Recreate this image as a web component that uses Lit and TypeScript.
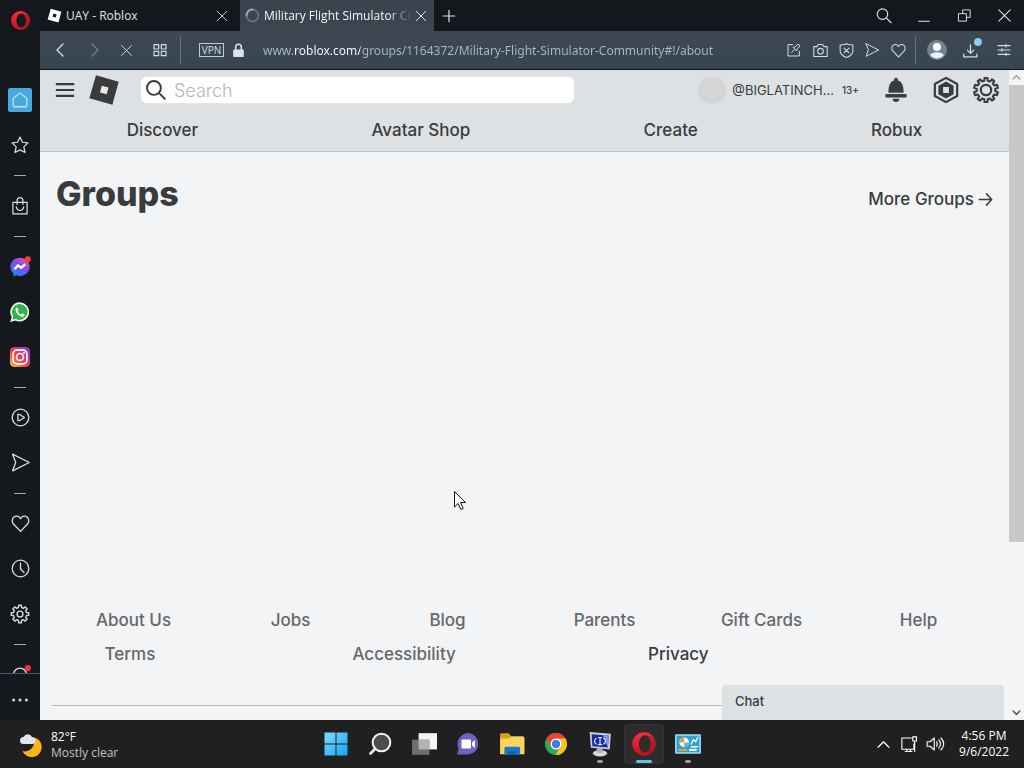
import { LitElement, html, css, svg, nothing, TemplateResult } from "lit";
import { customElement } from "lit/decorators.js";

const icon = (size: number, body: TemplateResult, box = 24) =>
  html`<svg width=${size} height=${size} viewBox="0 0 ${box} ${box}" fill="none" stroke="currentColor" stroke-width="1.5" stroke-linecap="round" stroke-linejoin="round" aria-hidden="true">${body}</svg>`;

const gearPath = (teeth: number, outer: number, inner: number, c = 12) => {
  const pts: string[] = [];
  const step = (Math.PI * 2) / teeth;
  for (let i = 0; i < teeth; i++) {
    const a = i * step - Math.PI / 2;
    for (const [k, r] of [[-0.3, inner], [-0.2, outer], [0.2, outer], [0.3, inner]]) {
      pts.push(`${(c + Math.cos(a + k * step) * r).toFixed(2)} ${(c + Math.sin(a + k * step) * r).toFixed(2)}`);
    }
  }
  return "M" + pts.join("L") + "Z";
};

const heart = svg`<path d="M12 21 4.2 12.9C2 10.6 2 7 4.2 4.9c2.2-2.1 5.5-1.8 7.2.6l.6.9.6-.9c1.7-2.4 5-2.7 7.2-.6 2.200 2.100 2.200 5.700 0 8z"/>`;
const send = svg`<path d="M3 2.500 22 12 3 21.500 6.500 12z"/>`;
const cross = svg`<path d="M4 4 20 20M20 4 4 20"/>`;
const glass = svg`<circle cx="10" cy="9.500" r="7"/><path d="m15 14.500 6.500 6.500"/>`;

const operaRing = (id: string) => svg`
  <defs><linearGradient id=${id} x1="0" y1="0" x2="0" y2="1"><stop offset="0" stop-color="#ff2c3c"/><stop offset="1" stop-color="#bd1220"/></linearGradient></defs>
  <path fill="url(#${id})" stroke="none" fill-rule="evenodd" d="M12 1.200a10.800 10.800 0 1 0 0 21.600 10.800 10.800 0 0 0 0-21.600zM13 4c3.100 0 5.200 3.500 5.200 8s-2.100 8-5.200 8-5.700-3.500-5.700-8S9.900 4 13 4z"/>
  <path fill="#7d0d18" stroke="none" d="M14.500 4.500c3 .8 4 4 4 7.500s-1 6.700-4 7.500c5 1.300 8.300-2.500 8.300-7.500S19.500 3.200 14.500 4.500z" opacity=".4"/>`;

const robloxMark = (fill: string, hole: string) => svg`<path stroke="none" fill=${fill} d="M6 1 23 5.800 18.300 23 1 18.200z"/><path stroke="none" fill=${hole} d="m10.300 8.900 5.100 1.300-1.400 5-5-1.300z"/>`;

const side: { label: string; art?: TemplateResult; rule?: boolean }[] = [
  { label: "Speed Dial", art: html`<span class="home">${icon(18, svg`<path stroke-width="1.700" d="M12 2.500 21 10v9.500c0 1-.6 1.500-1.500 1.500h-15C3.600 21 3 20.500 3 19.500V10z"/>`)}</span>` },
  { label: "Bookmarks", art: icon(20, svg`<path d="m12 2.500 2.900 6.200 6.600.8-4.900 4.700 1.400 6.800-6-3.200L6 21l1.400-6.800-4.900-4.700 6.600-.8z"/>`) },
  { label: "", rule: true },
  { label: "Shopping", art: icon(20, svg`<path d="M3.500 7.500h17v14h-17zM8.500 10V5.500a3.500 3.500 0 0 1 7 0V10M7.500 13c.6 3 2.300 4.300 4.500 4.300s3.900-1.300 4.500-4.300"/>`) },
  { label: "", rule: true },
  { label: "Messenger", art: icon(22, svg`
    <defs><linearGradient id="msg" x1=".2" y1="1" x2=".8" y2="0"><stop offset="0" stop-color="#1a86ff"/><stop offset=".55" stop-color="#7b4df2"/><stop offset="1" stop-color="#f0509a"/></linearGradient></defs>
    <path fill="url(#msg)" stroke="none" d="M12 2C6.200 2 1.500 6.200 1.500 11.800c0 3 1.300 5.500 3.400 7.300v3.300l3.200-1.300c1.200.4 2.500.6 3.900.6 5.800 0 10.500-4.200 10.500-9.900S17.800 2 12 2z"/>
    <path stroke="#fff" stroke-width="2.600" stroke-linecap="butt" d="m5.800 14.500 4-4.300 3.500 2.600 4.500-3.800"/><circle cx="20.500" cy="3.500" r="3.300" fill="#fa3b30" stroke="none"/>`) },
  { label: "WhatsApp", art: icon(22, svg`
    <path fill="#fff" stroke="none" d="M12 1.500A10.400 10.400 0 0 0 3 17.300L1.400 22.800l5.700-1.500A10.400 10.400 0 1 0 12 1.500z"/>
    <path fill="#35b34a" stroke="none" d="M12 3.200a8.700 8.700 0 0 0-7.300 13.600l-1 3.700 3.700-1A8.700 8.700 0 1 0 12 3.200z"/>
    <path fill="#fff" stroke="none" d="M8.600 7.200c-.9.300-1.700 1.400-1.400 2.900.7 3.200 3.600 6.200 6.700 7 1.500.4 2.900-.4 3.100-1.900l-.1-.6-2.400-1.200-1.300 1.300c-1.700-.6-3.200-2-3.900-3.800l1-1.200-1-2.400z"/>`) },
  { label: "Instagram", art: icon(22, svg`
    <defs><linearGradient id="ig" x1="0" y1="1" x2="1" y2="0"><stop offset="0" stop-color="#ffc94a"/><stop offset=".4" stop-color="#f5483f"/><stop offset=".7" stop-color="#c832a0"/><stop offset="1" stop-color="#6a45d8"/></linearGradient></defs>
    <rect x="1" y="1" width="22" height="22" rx="5" fill="url(#ig)" stroke="none"/><g stroke="#fff" stroke-width="1.800"><rect x="4.500" y="4.500" width="15" height="15" rx="4.200"/><circle cx="12" cy="12" r="3.800"/></g><circle cx="16.500" cy="7.500" r="1.100" fill="#fff" stroke="none"/>`) },
  { label: "", rule: true },
  { label: "Player", art: icon(21, svg`<circle cx="12" cy="12" r="9.500"/><path d="M9 8.500h2l5.500 3.500-5.500 3.500H9z"/>`) },
  { label: "My Flow", art: icon(21, send) },
  { label: "", rule: true },
  { label: "Favourites", art: icon(21, heart) },
  { label: "History", art: icon(21, svg`<circle cx="12" cy="12" r="9.500"/><path d="M12 6v6.500l4 4"/>`) },
  { label: "Settings", art: icon(22, svg`<path d=${gearPath(8, 9.600, 7.300)}/><circle cx="12" cy="12" r="3.200"/>`) },
  { label: "", rule: true },
  { label: "Notifications", art: icon(22, svg`<path d="M5 14v-2.500a7 7 0 0 1 14 0V14"/><circle cx="20.500" cy="4.500" r="3.400" fill="#f0323e" stroke="none"/>`) },
];

const tasks: { label: string; art: TemplateResult; mark?: string }[] = [
  { label: "Start", art: icon(24, svg`<defs><linearGradient id="win" x1="0" y1="0" x2="1" y2="1"><stop offset="0" stop-color="#7ddcff"/><stop offset="1" stop-color="#14a4ee"/></linearGradient></defs><path fill="url(#win)" stroke="none" d="M.5.500h11v11H.500zM12.500.500h11v11h-11zM.500 12.500h11v11H.500zM12.500 12.500h11v11h-11z"/>`) },
  { label: "Search", art: icon(24, svg`<path stroke="#e8e8e8" stroke-width="2.800" d="m2.500 21.500 5-5"/><circle cx="13.500" cy="10.500" r="8.800" fill="#4c4c4c" stroke="#f2f2f2" stroke-width="2"/>`) },
  { label: "Task View", art: icon(26, svg`<path fill="#f4f4f4" stroke="none" d="M7 2h17v15H7z"/><path fill="#747474" stroke="none" d="M1 8h16v14H1z" opacity=".95"/><path fill="#b4b4b4" stroke="none" d="M7 8h10v9H7z"/>`) },
  { label: "Chat", art: icon(24, svg`<path fill="#6a62c4" stroke="none" d="M12.500 1A11 11 0 0 0 2.700 17L1 22.500h11.500a10.800 10.800 0 0 0 0-21.500z"/><rect x="5.500" y="7.500" width="9.500" height="9" rx="1" fill="#fff" stroke="none"/><path fill="#fff" stroke="none" d="m16 10.500 3-2.500v8l-3-2.500z"/>`) },
  { label: "File Explorer", art: icon(26, svg`<path fill="#dc9d18" stroke="none" d="M1 3.500C1 2.500 1.700 2 2.500 2H9l2.500 3H22v6H1z"/><path fill="#ffd45c" stroke="none" d="M1 7h8.500l2-2H22c.8 0 1.500.5 1.500 1.500v15H1z"/><path fill="#1879cc" stroke="none" d="M5 22v-6c0-1 .6-1.500 1.500-1.500h11.500c1 0 1.500.5 1.500 1.500v6z"/><path fill="#0b5fae" stroke="none" d="M8.500 19h7.500v3H8.500z"/>`) },
  { label: "Chrome", art: icon(24, svg`<g stroke="none"><circle cx="12" cy="12" r="11" fill="#34a853"/><path fill="#ea4335" d="M2.500 6.500A11 11 0 0 1 21.500 6.500L12 7 7 14z"/><path fill="#fbc11c" d="M21.500 6.500A11 11 0 0 1 11.500 23l5-8.500L12 6.500z"/><circle cx="12" cy="12" r="5.500" fill="#fff"/><circle cx="12" cy="12" r="4.200" fill="#3b7ded"/></g>`) },
  { label: "Remote Desktop", mark: "dim", art: icon(26, svg`<g stroke="none"><ellipse cx="12" cy="20.500" rx="6.500" ry="3" fill="#d8dadd"/><path fill="#aeb4be" d="M9 16h5l1 4H9z"/><path fill="#c9cfda" d="M2.500 1 22 2.500 21 17 3.500 15.500z"/><path fill="#1b2c9c" d="m4.300 3 15.800 1.200-.8 11L5 14z"/><path fill="#7d97ee" d="m14.500 3.800 5.600.4-.8 11z"/></g><path stroke="#dfe6ff" stroke-width="1.100" d="M10.500 6h3M12 6v6.500M10.500 12.500h3M8.500 7c-2 1-2 4 0 5M15.500 7c2 1 2 4 0 5"/>`) },
  { label: "Opera", mark: "live", art: icon(26, operaRing("opTask")) },
  { label: "Control Panel", mark: "dim", art: icon(26, svg`<g stroke="none"><rect x="0" y="3" width="24" height="18" rx="1" fill="#8edcf7"/><rect x="1.500" y="4.500" width="21" height="15" fill="#2f9fd4"/><circle cx="8.500" cy="10.500" r="4.500" fill="#fff"/><path fill="#f59a23" d="M8.500 10.500V6a4.500 4.500 0 0 0-4.500 4.500z"/><path fill="#58b6e4" d="M8.500 10.500H13a4.500 4.500 0 0 1-4.500 4.500z"/><path fill="#f59a23" d="M3 16.500h8v2H3z"/><path fill="#e8f6fc" d="M13 16.500h7v2h-7z"/></g><path stroke="#fff" stroke-width="1.300" d="m15 12 2-4 2 2 2-4M15 14.500h6"/>`) },
];

@customElement("browser-sidebar")
class BrowserSidebar extends LitElement {
  static styles = css`
    :host { display: flex; flex-direction: column; width: 40px; background: #15191e; color: #d9dde1; }
    button { border: 0; padding: 0; background: none; color: inherit; display: grid; place-items: center; width: 100%; }
    svg { display: block; overflow: visible; }
    .brand { height: 40px; margin-bottom: 37px; flex: none; }
    .list { flex: 1; min-height: 0; overflow: hidden; display: flex; flex-direction: column; }
    .item { height: 45px; flex: none; }
    .rule { width: 12px; height: 16px; flex: none; margin: 0 auto; display: grid; align-items: center; }
    .rule::before { content: ""; height: 1px; background: #a4a8ac; }
    .home { width: 24px; height: 24px; background: #43a9e0; border-radius: 2px; display: grid; place-items: center; }
    .more { height: 47px; flex: none; border-top: 1px solid #545a60; padding-top: 6px; }
  `;
  render() {
    return html`
      <button class="brand" aria-label="Opera menu">${icon(21, operaRing("opSide"))}</button>
      <div class="list">
        ${side.map((s) => s.rule ? html`<div class="rule"></div>` : html`<button class="item" aria-label=${s.label}>${s.art}</button>`)}
      </div>
      <button class="more" aria-label="More">${icon(18, svg`<g fill="currentColor" stroke="none"><circle cx="3.500" cy="12" r="2"/><circle cx="12" cy="12" r="2"/><circle cx="20.500" cy="12" r="2"/></g>`)}</button>`;
  }
}

@customElement("browser-chrome")
class BrowserChrome extends LitElement {
  static styles = css`
    :host { display: block; font-family: "Open Sans", "Noto Sans", sans-serif; color: #dfe5ea; }
    button { border: 0; padding: 0; background: none; color: inherit; font: inherit; display: grid; place-items: center; }
    svg { display: block; overflow: visible; flex: none; }
    .tabs { display: flex; height: 31px; background: #14171c; font-size: 12px; }
    .tab { display: flex; align-items: center; width: 200px; box-sizing: border-box; padding-left: 7px; }
    .live { width: 194px; padding-left: 5px; background: #3a4550; color: #f4f6f8; }
    .name { flex: 1; min-width: 0; white-space: nowrap; padding-left: 4px; text-align: left; display: block; }
    .live .name { -webkit-mask-image: linear-gradient(90deg, #000 84%, transparent); mask-image: linear-gradient(90deg, #000 84%, transparent); }
    .shut { width: 24px; height: 31px; flex: none; margin-right: 6px; }
    .live .shut { width: 18px; margin-right: 4px; }
    .plus { width: 30px; }
    .win { width: 40px; }
    .gap { flex: 1; }
    .bar { display: flex; align-items: center; height: 38px; background: linear-gradient(#3f4852, #374552); border-bottom: 1px solid #10151b; padding: 0 4px; color: #d3dce4; }
    .nav { width: 33px; height: 38px; }
    .off { color: #717d88; }
    .line { width: 1px; height: 28px; background: #69747e; margin-left: 4px; }
    .vpn { border: 1px solid #c3ccd4; height: 14px; width: 25px; font-size: 10px; line-height: 12px; margin: 0 7px 0 18px; box-sizing: border-box; }
    .url { flex: 1; min-width: 0; border: 0; outline: 0; padding: 0; margin-left: 17px; height: 24px; font: 12px "Noto Sans", "Open Sans", sans-serif;
      background: linear-gradient(90deg, #adb8c3 31px, #ffffff 31px, #ffffff 97px, #adb8c3 97px); -webkit-background-clip: text; background-clip: text; color: transparent; }
    .act { width: 26px; height: 38px; }
    .user { width: 38px; height: 38px; padding-left: 4px; }
    .tail { width: 33px; height: 38px; }
  `;
  render() {
    const x = (n: number) => icon(n, cross);
    return html`
      <div class="tabs">
        <div class="tab">${icon(15, robloxMark("#fff", "#14171c"))}<button class="name">UAY - Roblox</button><button class="shut" aria-label="Close tab">${x(14)}</button></div>
        <div class="tab live">${icon(15, svg`<circle cx="12" cy="12" r="9.500" stroke="#64707b" stroke-width="3.200"/><path stroke="#98a3ad" stroke-width="3.200" d="M2.500 12A9.500 9.500 0 0 1 12 2.500"/>`)}<button class="name">Military Flight Simulator Co</button><button class="shut" aria-label="Close tab">${x(14)}</button></div>
        <button class="plus" aria-label="New tab">${icon(16, svg`<path stroke-width="1.800" d="M12 3.500v17M3.500 12h17"/>`)}</button>
        <span class="gap"></span>
        <button class="win" aria-label="Search tabs">${icon(18, glass)}</button>
        <button class="win" aria-label="Minimize">${icon(14, svg`<path stroke-width="2" d="M3 21h18"/>`)}</button>
        <button class="win" aria-label="Restore">${icon(15, svg`<path d="M3 9h12v12H3zM9 9V3h12v12h-6"/>`)}</button>
        <button class="win" aria-label="Close">${x(17)}</button>
      </div>
      <div class="bar">
        <button class="nav" aria-label="Back">${icon(16, svg`<path stroke-width="2" d="M15 3 6 12l9 9"/>`)}</button>
        <button class="nav off" aria-label="Forward">${icon(16, svg`<path stroke-width="2" d="m9 3 9 9-9 9"/>`)}</button>
        <button class="nav" aria-label="Stop">${x(15)}</button>
        <button class="nav" aria-label="Speed Dial">${icon(16, svg`<path stroke-width="1.800" d="M3 4h7v6.500H3zM14 4h7v6.500h-7zM3 14h7v6.500H3zM14 14h7v6.500h-7z"/>`)}</button>
        <span class="line"></span>
        <button class="vpn">VPN</button>
        ${icon(15, svg`<rect x="3.500" y="10.500" width="17" height="12" rx="1.500" fill="#dbe2e8" stroke="none"/><path stroke="#dbe2e8" stroke-width="2.500" d="M7.500 11V6.500a4.500 4.500 0 0 1 9 0V11"/>`)}
        <input class="url" aria-label="Address" value="www.roblox.com/groups/1164372/Military-Flight-Simulator-Community#!/about" />
        <button class="act" aria-label="Snapshot edit">${icon(16, svg`<path d="M10 4H3v17h17v-7M8.500 15.500l4-4M11 8.500l5 5 1-3.500 4-4L18 3l-4 4z"/>`)}</button>
        <button class="act" aria-label="Snapshot">${icon(17, svg`<path d="M2.500 6.500H7L9 3.500h6l2 3h4.500v14h-19z"/><circle cx="12" cy="13" r="4"/>`)}</button>
        <button class="act" aria-label="Ad blocker">${icon(17, svg`<path d="M12 2.500c3 1.300 6 1.800 9 1.800v8c0 4.500-4 7.700-9 9.700-5-2-9-5.200-9-9.700v-8c3 0 6-.5 9-1.800zM8.500 8.500l7 7M15.500 8.500l-7 7"/>`)}</button>
        <button class="act" aria-label="Send to Flow">${icon(16, send)}</button>
        <button class="act" aria-label="Bookmark">${icon(17, heart)}</button>
        <span class="line"></span>
        <button class="user" aria-label="Profile">${icon(20, svg`<g stroke="none"><circle cx="12" cy="12" r="12" fill="#75818c"/><circle cx="12" cy="8.500" r="4.800" fill="#fff"/><path fill="#e7f4fb" d="M3.800 18c2-4.500 14.400-4.500 16.400 0a10 10 0 0 1-16.400 0z"/></g>`)}</button>
        <button class="tail" aria-label="Downloads">${icon(17, svg`<path stroke-width="1.800" d="M12 4v12M7.500 11.500 12 16l4.500-4.500M2.500 17v4h18.500v-4"/><circle cx="22.500" cy="0" r="5.500" fill="#82d3ee" stroke="none"/>`)}</button>
        <button class="tail" aria-label="Easy setup">${icon(16, svg`<path stroke-width="1.700" d="M3 5.500h18M3 12h18M3 18.500h18M15 3.500v4M9 10v4M15 16.500v4"/>`)}</button>
      </div>`;
  }
}

@customElement("groups-page")
class GroupsPage extends LitElement {
  static styles = css`
    :host { display: flex; min-height: 0; font-family: Inter, "Open Sans", sans-serif; color: #393b3d; }
    button { border: 0; padding: 0; background: none; color: inherit; display: grid; place-items: center; }
    svg { display: block; overflow: visible; }
    a { color: inherit; text-decoration: none; }
    .page { flex: 1; min-width: 0; position: relative; display: flex; flex-direction: column; background: #f2f4f5; overflow: hidden; }
    .head { background: #dee1e3; border-bottom: 1px solid #bfc3c6; }
    .top { display: flex; align-items: center; height: 40px; padding: 0 8px 0 10px; }
    .menu { width: 30px; height: 40px; }
    .logo { width: 48px; display: grid; place-items: center; }
    .search { height: 28px; margin-left: 12px; box-sizing: border-box; background: #fff; border: 1px solid #e3e6e8; border-radius: 7px; display: flex; align-items: center; padding: 0 5px; flex: 0 1 435px; min-width: 0; }
    .query { flex: 1; min-width: 0; border: 0; outline: 0; padding: 0; margin-left: 8px; background: none; font: 300 18px Inter, sans-serif; color: #393b3d; }
    .query::placeholder { color: #b4b7b9; opacity: 1; }
    .space { flex: 1; }
    .who { display: flex; align-items: center; gap: 6px; font-size: 13px; }
    .face { width: 28px; height: 28px; border-radius: 50%; background: #d3d5d6; }
    .age { font-size: 10px; font-weight: 500; margin: 0 12px 0 8px; }
    .tool { width: 50px; height: 40px; }
    .nav { display: flex; justify-content: space-around; height: 41px; line-height: 41px; font-size: 17px; font-weight: 500; }
    .title { display: flex; align-items: center; justify-content: space-between; padding: 20px 16px 0; }
    h1 { margin: 0; font-size: 34px; line-height: 44px; font-weight: 800; }
    .more { display: flex; align-items: center; gap: 4px; font-size: 17px; font-weight: 500; padding-top: 10px; }
    .foot { margin-top: auto; padding: 0 12px 14px; font-size: 17px; font-weight: 500; color: #65686b; }
    .row { display: grid; grid-template-columns: repeat(6, 1fr); height: 34px; line-height: 34px; text-align: center; padding-left: 3px; }
    .low { grid-template-columns: 150fr 399fr 150fr 244fr; }
    .dark { color: #393b3d; }
    .edge { border-top: 1px solid #b8bbbd; margin-top: 34px; }
    .chat { position: absolute; right: 5px; bottom: 0; width: 282px; height: 35px; background: #dee1e3; border-radius: 4px 4px 0 0; font: 500 13px Inter, sans-serif; text-align: left; padding: 0 13px 4px; display: block; }
    .scroll { width: 15px; display: flex; flex-direction: column; background: #f3f4f5; color: #55585a; }
    .arrow { height: 15px; width: 15px; }
    .faint { color: #a5a7a9; }
    .thumb { flex: 457; background: #c7c8c9; }
    .rest { flex: 163; }
  `;
  render() {
    return html`
      <div class="page">
        <header class="head">
          <div class="top">
            <button class="menu" aria-label="Menu">${icon(20, svg`<path stroke-width="2.600" stroke-linecap="butt" d="M1 5h22M1 12h22M1 19h22"/>`)}</button>
            <a class="logo" href="#home" aria-label="Roblox">${icon(32, robloxMark("#393b3d", "#e6e9eb"))}</a>
            <label class="search">${icon(20, svg`<g stroke-width="2.300"><circle cx="9.500" cy="9.500" r="8.300"/><path d="m15.700 15.700 7 7"/></g>`)}<input class="query" type="search" placeholder="Search" aria-label="Search" /></label>
            <span class="space"></span>
            <div class="who"><span class="face"></span><span>@BIGLATINCH...</span></div>
            <span class="age">13+</span>
            <button class="tool" aria-label="Notifications">${icon(26, svg`<g fill="currentColor" stroke="none"><circle cx="12" cy="2.500" r="1.800"/><path d="M5 14.500C5 7 7 3 12 3s7 4 7 11.500z"/><path d="M3.500 15.700h17c1 0 1.500.7 1.500 1.600S21.500 19 20.500 19h-17C2.500 19 2 18.200 2 17.300s.5-1.600 1.500-1.600zM9 20h6a3 3 0 0 1-6 0z"/></g>`)}</button>
            <button class="tool" aria-label="Robux">${icon(26, svg`<path stroke-width="2" d="m12 .8 10.300 5.700v11L12 23.200 1.700 17.500v-11z"/><path fill="currentColor" stroke="none" fill-rule="evenodd" d="m12 4.200 7 3.900v7.800l-7 3.900-7-3.900V8.100zM9.300 9.300v5.400h5.400V9.300z"/>`)}</button>
            <button class="menu" aria-label="Settings">${icon(26, svg`<path stroke-width="1.900" d=${gearPath(10, 11.200, 8.600)}/><circle cx="12" cy="12" r="4.800" stroke-width="2"/>`)}</button>
          </div>
          <nav class="nav">${["Discover", "Avatar Shop", "Create", "Robux"].map((t) => html`<a href="#${t}">${t}</a>`)}</nav>
        </header>
        <div class="title"><h1>Groups</h1><a class="more" href="#more">More Groups ${icon(15, svg`<path stroke-width="2.400" d="M2 12h20M13.500 3l8.500 9-8.500 9"/>`)}</a></div>
        <footer class="foot">
          <div class="row">${["About Us", "Jobs", "Blog", "Parents", "Gift Cards", "Help"].map((t) => html`<a href="#${t}">${t}</a>`)}</div>
          <div class="row low"><a href="#terms">Terms</a><a href="#accessibility">Accessibility</a><a class="dark" href="#privacy">Privacy</a></div>
          <div class="edge"></div>
        </footer>
        <button class="chat">Chat</button>
      </div>
      <div class="scroll">
        <button class="arrow faint" aria-label="Scroll up">${icon(9, svg`<path stroke-width="4" d="m3 16 9-9 9 9"/>`)}</button>
        <div class="thumb"></div><div class="rest"></div>
        <button class="arrow" aria-label="Scroll down">${icon(9, svg`<path stroke-width="4" d="m3 8 9 9 9-9"/>`)}</button>
      </div>`;
  }
}

@customElement("task-bar")
class TaskBar extends LitElement {
  static styles = css`
    :host { display: grid; grid-template-columns: 1fr auto 1fr; height: 48px; background: #202020; color: #fff; font: 12px/16px "Open Sans", "Noto Sans", sans-serif; }
    button { border: 0; padding: 0; background: none; color: inherit; font: inherit; display: grid; place-items: center; }
    svg { display: block; overflow: visible; }
    .weather { display: flex; align-items: center; gap: 8px; padding: 2px 0 0 19px; text-align: left; justify-self: start; }
    .sky { color: #c4c4c4; }
    .apps { display: flex; }
    .app { width: 44px; height: 48px; position: relative; }
    .on::before { content: ""; position: absolute; inset: 4px 2px; background: #2d2d2d; border: 1px solid #353535; border-radius: 4px; }
    .on svg { position: relative; }
    .mark { position: absolute; bottom: 5px; left: 19px; width: 6px; height: 3px; border-radius: 2px; background: #9b9b9b; }
    .wide { left: 14px; width: 16px; background: #60c0ee; }
    .tray { display: flex; align-items: center; justify-content: flex-end; padding-right: 15px; }
    .t { width: 26px; height: 48px; }
    .clock { text-align: right; display: block; margin-left: 11px; }
  `;
  render() {
    return html`
      <button class="weather">${icon(24, svg`<g stroke="none"><path fill="#fbb51b" d="M15.500 4.500A10 10 0 1 1 3.500 18c7 2 13-4 12-13.500z"/><path fill="#dfe6ee" d="M4.500 11a3.500 3.500 0 0 1 0-7 4.700 4.700 0 0 1 8.500 0 3.500 3.500 0 0 1 0 7z"/></g>`)}
        <span><div>82°F</div><div class="sky">Mostly clear</div></span></button>
      <div class="apps">${tasks.map((t) => html`<button class="app ${t.mark === "live" ? "on" : ""}" aria-label=${t.label}>${t.art}${t.mark ? html`<span class="mark ${t.mark === "live" ? "wide" : ""}"></span>` : nothing}</button>`)}</div>
      <div class="tray">
        <button class="t" aria-label="Hidden icons">${icon(13, svg`<path stroke-width="2.300" d="m2 17 10-10 10 10"/>`)}</button>
        <button class="t" aria-label="Network">${icon(18, svg`<path d="M15 4H2.500v15h16v-7M7 22h9M9 19v3M14 19v3M17 2.500h5v5.500h-5zM19.500 8v14"/>`)}</button>
        <button class="t" aria-label="Volume">${icon(18, svg`<path d="M1.500 9h4L11 4v16l-5.500-5h-4zM14 9c1.500 2 1.500 4 0 6M17 6.500c3 3.500 3 7.500 0 11M20 4c4.500 5 4.500 11 0 16"/>`)}</button>
        <button class="clock"><div>4:56 PM</div><div>9/6/2022</div></button>
      </div>`;
  }
}

@customElement("app-root")
class AppRoot extends LitElement {
  static styles = css`
    :host { display: flex; flex-direction: column; height: 100vh; position: relative; overflow: hidden; }
    .main { flex: 1; min-height: 0; display: flex; }
    .view { flex: 1; min-width: 0; display: flex; flex-direction: column; }
    .fill { flex: 1; }
    .pointer { position: absolute; left: 453px; top: 490px; }
  `;
  render() {
    return html`
      <div class="main">
        <browser-sidebar></browser-sidebar>
        <div class="view"><browser-chrome></browser-chrome><groups-page class="fill"></groups-page></div>
      </div>
      <task-bar></task-bar>
      <svg class="pointer" width="14" height="22" viewBox="0 0 14 22" aria-hidden="true"><path d="M1.500 1.500v15.500l3.700-3.500 2.600 6 2.400-1-2.600-6h4.900z" fill="#fff" stroke="#111" stroke-width="1"/></svg>`;
  }
}
